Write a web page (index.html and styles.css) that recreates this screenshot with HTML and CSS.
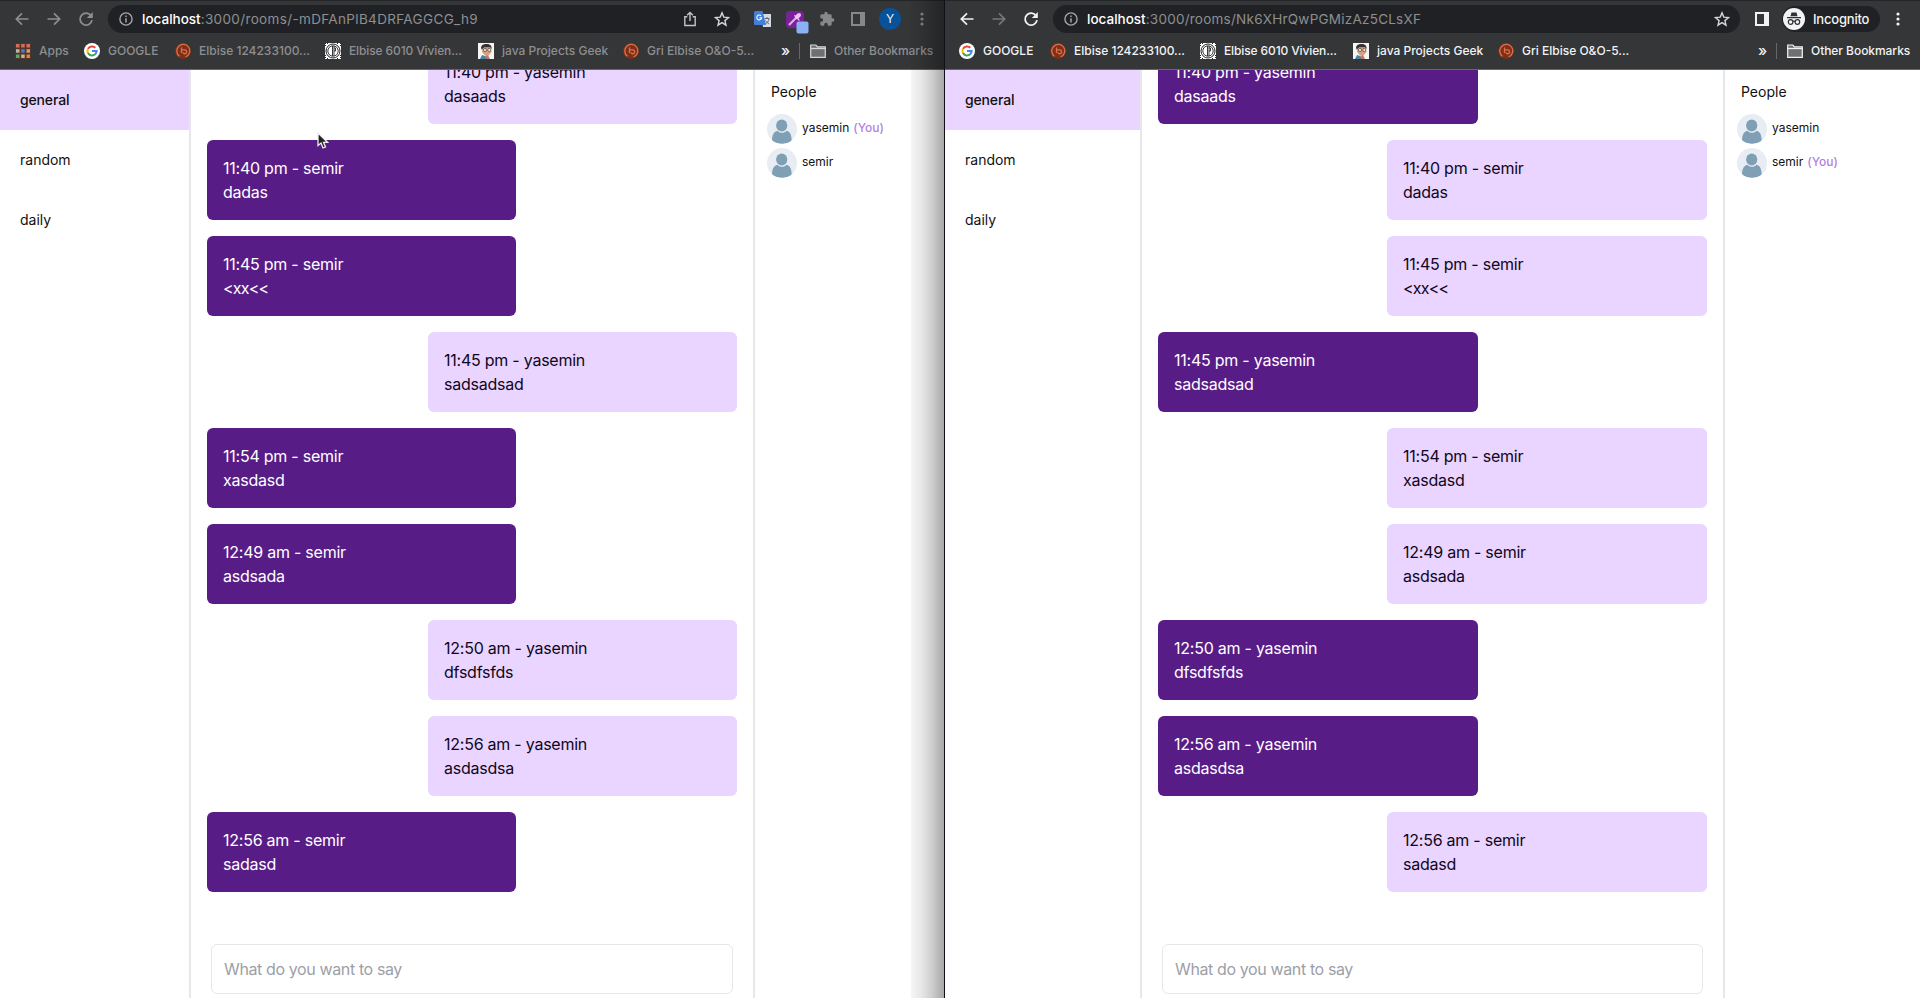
FILE: index.html
```
<!DOCTYPE html>
<html lang="en">
<head>
<meta charset="utf-8">
<title>Chat rooms</title>
<link rel="stylesheet" href="styles.css">
</head>
<body>
<svg class="defs" width="0" height="0">
  <symbol id="back" viewBox="0 0 16 16"><path d="M14.5 8H2.5M8 2.3 2.3 8 8 13.7" fill="none" stroke="currentColor" stroke-width="1.7"/></symbol>
  <symbol id="fwd" viewBox="0 0 16 16"><path d="M1.5 8h12M8 2.3 13.7 8 8 13.7" fill="none" stroke="currentColor" stroke-width="1.7"/></symbol>
  <symbol id="reload" viewBox="0 0 16 16"><path d="M13.2 5A6 6 0 1 0 14 9.2" fill="none" stroke="currentColor" stroke-width="1.8"/><path d="M14.8 1v6H8.8z" fill="currentColor"/></symbol>
  <symbol id="info" viewBox="0 0 14 14"><circle cx="7" cy="7" r="6.1" fill="none" stroke="currentColor" stroke-width="1.4"/><path d="M7 6.2v4.2M7 3.6v1.5" stroke="currentColor" stroke-width="1.5"/></symbol>
  <symbol id="share" viewBox="0 0 14 16"><path d="M4.3 5.8H1.8v8.7h10.4V5.8H9.7M7 10V1.6M4.1 4.3 7 1.4l2.9 2.9" fill="none" stroke="currentColor" stroke-width="1.4"/></symbol>
  <symbol id="star" viewBox="0 0 16 16"><path d="m8 1.8 1.8 4.3 4.7.4-3.6 3.1 1.1 4.6L8 11.7l-4 2.5 1.1-4.6-3.6-3.1 4.7-.4z" fill="none" stroke="currentColor" stroke-width="1.4"/></symbol>
  <symbol id="panel" viewBox="0 0 14 14"><path fill-rule="evenodd" fill="currentColor" d="M0 0h14v14H0zM2 2v10h7V2z"/></symbol>
  <symbol id="dots" viewBox="0 0 4 14"><g fill="currentColor"><circle cx="2" cy="2" r="1.6"/><circle cx="2" cy="7" r="1.6"/><circle cx="2" cy="12" r="1.6"/></g></symbol>
  <symbol id="puzzle" viewBox="0 0 24 24"><path fill="currentColor" d="M20.5 11H19V7a2 2 0 0 0-2-2h-4V3.500a2.500 2.500 0 0 0-5 0V5H4a2 2 0 0 0-2 2v3.800h1.500a2.700 2.700 0 0 1 0 5.400H2V20c0 1.100.9 2 2 2h3.800v-1.500a2.700 2.700 0 0 1 5.400 0V22H17a2 2 0 0 0 2-2v-4h1.500a2.500 2.500 0 0 0 0-5z"/></symbol>
  <symbol id="apps" viewBox="0 0 16 16"><path fill="#7c3017" d="M0 0h16v16H0z" opacity=".45"/><g fill="#d0705a"><path d="M1 1h3.500v3.500H1zM6.200 1h3.500v3.500H6.200zM11.500 1H15v3.500h-3.500z"/></g><path fill="#b9b5ac" d="M1 6.200h3.500v3.500H1z"/><path fill="#3e7fd0" d="M6.200 6.200h3.500v3.500H6.200z"/><path fill="#d0a070" d="M11.500 6.200H15v3.500h-3.500z"/><path fill="#4dae68" d="M1 11.500h3.500V15H1z"/><path fill="#cbb28a" d="M6.200 11.500h3.500V15H6.200z"/><path fill="#c98c4a" d="M11.500 11.500H15V15h-3.500z"/></symbol>
  <symbol id="google" viewBox="0 0 16 16"><circle cx="8" cy="8" r="8" fill="#fff"/><g fill="none" stroke-width="2"><path d="M11.300 4.700A4.600 4.600 0 0 0 4 5.900" stroke="#ea4335"/><path d="M4 5.800a4.600 4.600 0 0 0 0 4.400" stroke="#fbbc05"/><path d="M4 10.100a4.600 4.600 0 0 0 7.100 1.200" stroke="#34a853"/><path d="M8 8.100h4.600a4.600 4.600 0 0 1-1.600 3.300" stroke="#4285f4"/></g></symbol>
  <symbol id="elbise" viewBox="0 0 16 16"><circle cx="8" cy="8" r="7.900" fill="#7c3017"/><path d="M4.500 13.200A6.500 6.500 0 1 1 10.500 14M6.500 4.500v5.500M6.500 6.800H10M10 6.800a2 2 0 1 1-2.200 2.800" fill="none" stroke="#dc704c" stroke-width="1.300"/></symbol>
  <symbol id="vivien" viewBox="0 0 16 16"><path fill="#fff" d="M0 0h16v16H0z"/><g fill="none" stroke="#222"><circle cx="8" cy="8" r="7" stroke-width="1" /><circle cx="8" cy="8" r="5.200" stroke-width=".9"/><path d="M7.500 3v10M9 3v10M9 5h1.500v3H9" stroke-width=".9"/><path d="M.5 0v4M15.500 0v4M.5 12v4M15.500 12v4M2 .5h2M12 .5h2M2 15.500h2M12 15.500h2" stroke-dasharray="1 1"/></g></symbol>
  <symbol id="java" viewBox="0 0 16 16"><path fill="#f6f6f4" d="M0 0h16v16H0z"/><path d="M3 5C3 2 6 .5 9 1c3.500 0 5 2.500 4.500 5L12 4.500 6 4.500 4 7z" fill="#39302e"/><path d="M4.500 5.500 12.500 4.500l1 4.500-3 3.500H7L4 9z" fill="#d9a17f"/><g fill="#f4e5dd" stroke="#444" stroke-width=".7"><circle cx="7" cy="7" r="1.600"/><circle cx="11.300" cy="7" r="1.600"/></g><path d="m2 16 2-4 3 1 3 3z" fill="#4784a8"/><path d="m7 13 3-1 2 4H9z" fill="#c9756a"/></symbol>
  <symbol id="folder" viewBox="0 0 16 14"><path d="M.700 2V1h5.200l1.500 1.800h7.900v10.500H.700z" fill="#6f7072" stroke="currentColor" stroke-width="1.200"/><path d="M.700 4.500h14.600" stroke="currentColor" stroke-width="1.300"/></symbol>
  <symbol id="avatar" viewBox="0 0 30 30"><clipPath id="round"><circle cx="15" cy="15" r="15"/></clipPath><circle cx="15" cy="15" r="15" fill="#e7edf2"/><g fill="#7f9fb5" clip-path="url(#round)"><ellipse cx="14.700" cy="11.500" rx="5.600" ry="6"/><path d="M5 27c0-6 2-9.500 5.500-10.200C13 19.500 17 19.500 19.500 16.800 23 17.500 24.700 21 24.700 27c-3 3.700-16.700 3.700-19.700 0z"/></g></symbol>
  <symbol id="translate" viewBox="0 0 17 17"><path d="M7 3h10v13H9z" fill="#d7dce2"/><path d="M10.500 7.500h5M13 6v1.500M15 8c-.5 2.500-2 4-4 5M11.500 9.500c.7 1.500 2 2.500 3.500 3" stroke="#667" stroke-width="1" fill="none"/><path d="M1 0h7.500l3.500 14H1a1 1 0 0 1-1-1V1z" fill="#427fd8"/><path d="M7 4.800a2.400 2.400 0 1 0 .6 2H5.400" stroke="#fff" stroke-width="1.100" fill="none"/></symbol>
  <symbol id="picker" viewBox="0 0 23 23"><rect x="0" y="0" width="18" height="17" rx="4" fill="#79209a"/><path d="m3 14 7.500-7.500" stroke="#e6a9ea" stroke-width="2.200"/><path d="m11 6 2-2" stroke="#f0c4f2" stroke-width="4" stroke-linecap="round"/><path d="m8.800 4.800 4.200 4.200" stroke="#f0c4f2" stroke-width="1.300" stroke-linecap="round"/><rect x="10.500" y="10.500" width="12" height="12" rx="2" fill="#8ab0f5"/></symbol>
  <symbol id="spy" viewBox="0 0 22 22"><circle cx="11" cy="11" r="11" fill="#f1f3f4"/><path d="M7.500 8.300 8.500 4.500h5l1 3.800zM4 9h14v1.200H4z" fill="#303134"/><g fill="none" stroke="#303134" stroke-width="1.200"><circle cx="7.600" cy="14" r="2.300"/><circle cx="14.400" cy="14" r="2.300"/><path d="M9.900 13.600q1.100-.8 2.200 0"/></g></symbol>
</svg>

<div class="desktop">
  <section class="window window-left">
    <header class="chrome">
      <div class="toolbar">
        <svg class="nav"><use href="#back"/></svg>
        <svg class="nav"><use href="#fwd"/></svg>
        <svg class="nav"><use href="#reload"/></svg>
        <div class="address">
          <svg class="info"><use href="#info"/></svg>
          <div class="url url-left"><b>localhost</b>:3000/rooms/-mDFAnPlB4DRFAGGCG_h9</div>
          <svg class="share"><use href="#share"/></svg>
          <svg class="star"><use href="#star"/></svg>
        </div>
        <div class="actions">
          <svg class="translate"><use href="#translate"/></svg>
          <svg class="picker"><use href="#picker"/></svg>
          <svg class="puzzle"><use href="#puzzle"/></svg>
          <svg class="panel"><use href="#panel"/></svg>
          <span class="profile">Y</span>
          <svg class="dots"><use href="#dots"/></svg>
        </div>
      </div>
      <nav class="bookmarks">
        <a class="bm bm-apps"><svg><use href="#apps"/></svg><span>Apps</span></a>
        <a class="bm bm-google"><svg><use href="#google"/></svg><span>GOOGLE</span></a>
        <a class="bm bm-elbise"><svg><use href="#elbise"/></svg><span>Elbise 124233100...</span></a>
        <a class="bm bm-vivien"><svg><use href="#vivien"/></svg><span>Elbise 6010 Vivien...</span></a>
        <a class="bm bm-java"><svg><use href="#java"/></svg><span>java Projects Geek</span></a>
        <a class="bm bm-gri"><svg><use href="#elbise"/></svg><span>Gri Elbise O&amp;O-5...</span></a>
        <span class="more">»</span>
        <a class="bm bm-other"><svg><use href="#folder"/></svg><span>Other Bookmarks</span></a>
      </nav>
    </header>
    <div class="app">
      <aside class="rooms"><a class="active">general</a><a>random</a><a>daily</a></aside>
      <main class="chat">
        <div class="messages">
          <div class="msg mine"><p>11:40 pm - yasemin</p><p>dasaads</p></div>
          <div class="msg"><p>11:40 pm - semir</p><p>dadas</p></div>
          <div class="msg"><p>11:45 pm - semir</p><p class="tight">&lt;xx&lt;&lt;</p></div>
          <div class="msg mine"><p>11:45 pm - yasemin</p><p>sadsadsad</p></div>
          <div class="msg"><p>11:54 pm - semir</p><p>xasdasd</p></div>
          <div class="msg"><p>12:49 am - semir</p><p>asdsada</p></div>
          <div class="msg mine"><p>12:50 am - yasemin</p><p>dfsdfsfds</p></div>
          <div class="msg mine"><p>12:56 am - yasemin</p><p>asdasdsa</p></div>
          <div class="msg"><p>12:56 am - semir</p><p>sadasd</p></div>
        </div>
        <div class="composer"><span>What do you want to say</span></div>
      </main>
      <aside class="people">
        <h2>People</h2>
        <div class="person"><svg><use href="#avatar"/></svg><span>yasemin</span><em>(You)</em></div>
        <div class="person"><svg><use href="#avatar"/></svg><span>semir</span></div>
      </aside>
    </div>
    <div class="window-shadow"></div>
    <svg class="cursor" viewBox="0 0 12 17"><path d="M1 1v12.500l3-2.500 2 5 2.500-1-2-4.700h4z" fill="#222" stroke="#eee" stroke-width="1.300"/></svg>
  </section>

  <section class="window window-right">
    <header class="chrome">
      <div class="toolbar">
        <svg class="nav"><use href="#back"/></svg>
        <svg class="nav dim"><use href="#fwd"/></svg>
        <svg class="nav"><use href="#reload"/></svg>
        <div class="address">
          <svg class="info"><use href="#info"/></svg>
          <div class="url url-right"><b>localhost</b>:3000/rooms/Nk6XHrQwPGMizAz5CLsXF</div>
          <svg class="star"><use href="#star"/></svg>
        </div>
        <div class="actions">
          <svg class="panel"><use href="#panel"/></svg>
          <span class="incognito"><svg><use href="#spy"/></svg><span>Incognito</span></span>
          <svg class="dots"><use href="#dots"/></svg>
        </div>
      </div>
      <nav class="bookmarks">
        <a class="bm bm-google"><svg><use href="#google"/></svg><span>GOOGLE</span></a>
        <a class="bm bm-elbise"><svg><use href="#elbise"/></svg><span>Elbise 124233100...</span></a>
        <a class="bm bm-vivien"><svg><use href="#vivien"/></svg><span>Elbise 6010 Vivien...</span></a>
        <a class="bm bm-java"><svg><use href="#java"/></svg><span>java Projects Geek</span></a>
        <a class="bm bm-gri"><svg><use href="#elbise"/></svg><span>Gri Elbise O&amp;O-5...</span></a>
        <span class="more">»</span>
        <a class="bm bm-other"><svg><use href="#folder"/></svg><span>Other Bookmarks</span></a>
      </nav>
    </header>
    <div class="app">
      <aside class="rooms"><a class="active">general</a><a>random</a><a>daily</a></aside>
      <main class="chat">
        <div class="messages">
          <div class="msg"><p>11:40 pm - yasemin</p><p>dasaads</p></div>
          <div class="msg mine"><p>11:40 pm - semir</p><p>dadas</p></div>
          <div class="msg mine"><p>11:45 pm - semir</p><p class="tight">&lt;xx&lt;&lt;</p></div>
          <div class="msg"><p>11:45 pm - yasemin</p><p>sadsadsad</p></div>
          <div class="msg mine"><p>11:54 pm - semir</p><p>xasdasd</p></div>
          <div class="msg mine"><p>12:49 am - semir</p><p>asdsada</p></div>
          <div class="msg"><p>12:50 am - yasemin</p><p>dfsdfsfds</p></div>
          <div class="msg"><p>12:56 am - yasemin</p><p>asdasdsa</p></div>
          <div class="msg mine"><p>12:56 am - semir</p><p>sadasd</p></div>
        </div>
        <div class="composer"><span>What do you want to say</span></div>
      </main>
      <aside class="people">
        <h2>People</h2>
        <div class="person"><svg><use href="#avatar"/></svg><span>yasemin</span></div>
        <div class="person"><svg><use href="#avatar"/></svg><span>semir</span><em>(You)</em></div>
      </aside>
    </div>
  </section>
</div>
</body>
</html>
```

FILE: styles.css
```
* { box-sizing: border-box; }
body { margin: 0; font-family: Inter, "Liberation Sans", sans-serif; background: #fff; color: #111; overflow: hidden; }
p, h2 { margin: 0; }
svg { display: block; flex: none; }
.defs { position: absolute; }
.desktop { display: flex; width: 1920px; height: 998px; }
.window { position: relative; display: flex; flex-direction: column; height: 998px; overflow: hidden; }
.window-left { width: 944px; }
.window-right { width: 976px; border-left: 1px solid #101018; }

/* Browser chrome */
.chrome { flex: none; height: 70px; background: #353638; border-top: 1px solid #242528; border-bottom: 1px solid #66676a; color: #f1f3f4; }
.toolbar { display: flex; align-items: center; height: 36px; }
.nav { width: 16px; height: 16px; margin-right: 16px; }
.window-left .nav { color: #8d8e90; }
.window-right .nav.dim { color: #77787a; }
.window-left .toolbar { padding-left: 14px; }
.window-right .toolbar { padding-left: 14px; }
.address { display: flex; align-items: center; height: 28px; background: #202124; border-radius: 14px; padding-left: 11px; margin-left: -2px; }
.window-left .address { width: 632px; }
.window-right .address { width: 687px; }
.info { width: 14px; height: 14px; color: #a5a6a8; margin-right: 9px; }
.url { font-size: 13.500px; line-height: 20px; color: #8d8f92; white-space: nowrap; flex: 1; }
.url-left { letter-spacing: .35px; }
.url-right { letter-spacing: .24px; }
.url b { color: #fff; font-weight: 500; letter-spacing: 0; }
.share { width: 14px; height: 16px; color: #c2c3c5; margin-right: 17px; }
.star { width: 16px; height: 16px; color: #d6d7d9; margin-right: 10px; }
.actions { display: flex; align-items: center; }
.translate { width: 17px; height: 17px; margin-left: 14px; }
.picker { width: 23px; height: 23px; margin: 6px 0 0 15px; }
.puzzle { width: 16px; height: 16px; color: #87888a; margin-left: 10px; }
.panel { width: 14px; height: 14px; }
.window-left .panel { color: #87888a; margin-left: 16px; }
.window-right .panel { color: #f1f3f4; margin-left: 15px; }
.profile { width: 22px; height: 22px; border-radius: 50%; background: #07529a; font-size: 12px; line-height: 22px; text-align: center; margin-left: 14px; }
.dots { width: 4px; height: 14px; margin-left: 19px; }
.window-left .dots { color: #87888a; }
.incognito { display: flex; align-items: center; width: 98px; height: 26px; margin-left: 13px; padding-left: 1px; border-radius: 13px; background: #202124; font-size: 13px; font-weight: 500; letter-spacing: -.2px; }
.incognito svg { width: 22px; height: 22px; margin-right: 8px; }
.window-right .dots { margin-left: 16px; }

.bookmarks { display: flex; align-items: center; height: 28px; font-size: 12px; font-weight: 500; }
.bm { display: flex; align-items: center; gap: 8px; white-space: nowrap; height: 20px; }
.bm svg { width: 16px; height: 16px; }
.bm span { margin-bottom: 1px; }
.window-left .bm { color: #8e8f91; }
.window-left .bookmarks { padding-left: 15px; }
.window-right .bookmarks { padding-left: 14px; }
.bm-apps { width: 69px; }
.bm-google { width: 91px; }
.bm-elbise { width: 150px; }
.bm-vivien { width: 153px; letter-spacing: -.12px; }
.bm-java { width: 145px; }
.bm-gri { width: 158px; }
.window-right .bm-gri { width: 260px; }
.more { width: 18px; font-size: 15px; line-height: 16px; margin-bottom: 1px; }
.bm-other { border-left: 1px solid #66676a; height: 16px; padding-left: 10px; letter-spacing: -.05px; }
.window-left .bm-other svg { color: #d5d6d8; }

/* Chat application */
.app { display: flex; flex: 1; min-height: 0; background: #fff; }
.rooms { border-right: 2px solid #e5e7eb; flex: none; }
.window-left .rooms { width: 191px; }
.window-right .rooms { width: 197px; }
.rooms a { display: block; height: 60px; padding: 0 20px; line-height: 60px; font-size: 14px; }
.rooms .active { background: #e9d5ff; font-weight: 500; letter-spacing: -.15px; }
.chat { display: flex; flex-direction: column; border-right: 2px solid #e5e7eb; flex: none; }
.window-left .chat { width: 564px; }
.window-right .chat { width: 583px; }
.messages { display: flex; flex-direction: column; justify-content: flex-end; gap: 16px; height: 822px; padding: 0 16px; overflow: hidden; }
.msg { flex: none; height: 80px; padding: 16px; border-radius: 6px; background: #581c87; color: #fff; font-size: 16px; line-height: 24px; letter-spacing: -.24px; }
.msg .tight { letter-spacing: -.8px; }
.window-left .msg { width: 309px; }
.window-right .msg { width: 320px; }
.window-left .mine, .window-right .mine { align-self: flex-end; background: #e9d5ff; color: #110620; }
.composer { margin: 52px 20px 0; height: 50px; border: 1px solid #e5e7eb; border-radius: 6px; padding: 0 12px; font-size: 16px; line-height: 48px; letter-spacing: -.38px; color: #9ca0a6; }
.people { flex: 1; padding: 11px 0 0 16px; }
.people h2 { font-size: 14px; line-height: 22px; font-weight: 400; margin-bottom: 11px; }
.person { display: flex; align-items: center; height: 30px; margin: 0 0 4px -4px; font-size: 12px; }
.person svg { width: 30px; height: 30px; margin-right: 5px; }
.person span, .person em { margin-bottom: 4px; }
.person em { font-style: normal; font-weight: 500; color: #b27fe0; margin-left: 4px; }

/* Overlays */
.window-shadow { position: absolute; top: 0; right: 0; width: 33px; height: 998px; background: linear-gradient(90deg, rgba(0,0,0,.04), rgba(0,0,0,.09) 30%, rgba(0,0,0,.18) 60%, rgba(0,0,0,.34)); }
.cursor { position: absolute; left: 317px; top: 132px; width: 12px; height: 17px; }
```
